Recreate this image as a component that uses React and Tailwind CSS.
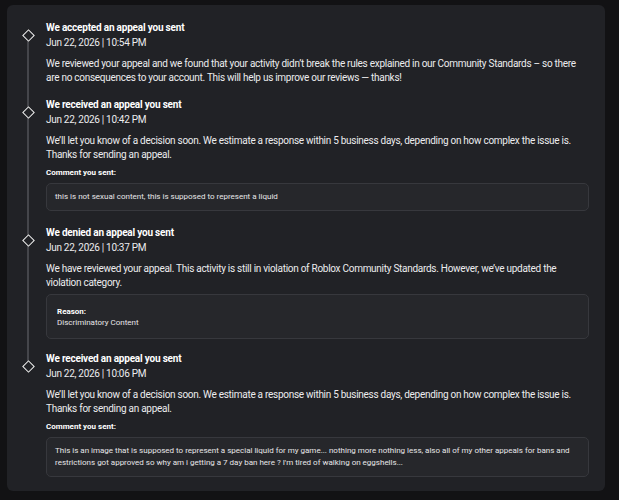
import React from "react";

const items = [
    {
        title: "We accepted an appeal you sent",
        date: "Jun 22, 2026 | 10:54 PM",
        body: "We reviewed your appeal and we found that your activity didn’t break the rules explained in our Community Standards – so there are no consequences to your account. This will help us improve our reviews — thanks!",
    },
    {
        title: "We received an appeal you sent",
        date: "Jun 22, 2026 | 10:42 PM",
        body: "We’ll let you know of a decision soon. We estimate a response within 5 business days, depending on how complex the issue is. Thanks for sending an appeal.",
        comment: "this is not sexual content, this is supposed to represent a liquid",
    },
    {
        title: "We denied an appeal you sent",
        date: "Jun 22, 2026 | 10:37 PM",
        body: "We have reviewed your appeal. This activity is still in violation of Roblox Community Standards. However, we’ve updated the violation category.",
        reason: "Discriminatory Content",
    },
    {
        title: "We received an appeal you sent",
        date: "Jun 22, 2026 | 10:06 PM",
        body: "We’ll let you know of a decision soon. We estimate a response within 5 business days, depending on how complex the issue is. Thanks for sending an appeal.",
        comment: "This is an image that is supposed to represent a special liquid for my game... nothing more nothing less, also all of my other appeals for bans and restrictions got approved so why am i getting a 7 day ban here ? I'm tired of walking on eggshells...",
    },
];

const TimelineItem = ({ item, first, last }) => {
    // comment rows sit a little further from the next entry
    const pad = last ? "pb-[14px]" : item.comment ? "pb-[15px]" : "pb-[13px]";

    return (
        <div className="flex">
            {/* timeline column */}
            <div className="w-[39px] flex flex-col items-center shrink-0 pl-[3px]">
                <div className={`w-[2px] h-[9px] ${first ? "" : "bg-[#45464b]"}`} />
                <div className="w-[9px] h-[9px] rotate-45 border-[1.5px] border-[#f2f2f2] bg-[#212226] my-[1px]" />
                <div className={`w-[2px] flex-1 ${last ? "" : "bg-[#45464b]"}`} />
            </div>

            <div className={`flex-1 pr-[16px] ${pad}`}>
                <div className="text-[10px] leading-[14px] font-bold tracking-[-0.2px] text-white">{item.title}</div>
                <div className="text-[10px] leading-[14px] tracking-[-0.3px] text-[#ececee] mt-[1px]">{item.date}</div>
                <p className="text-[10px] leading-[14px] tracking-[-0.28px] text-[#ececee] mt-[7px]">{item.body}</p>

                {item.comment && (
                    <>
                        <div className="text-[8px] leading-[12px] font-bold text-white mt-[5px]">Comment you sent:</div>
                        <div className="mt-[4px] rounded-[5px] border border-[#37383d] bg-[#26272b] px-[8px] py-[7px] text-[8px] leading-[12px] text-[#e6e6e8]">
                            {item.comment}
                        </div>
                    </>
                )}

                {item.reason && (
                    <div className="mt-[4px] rounded-[5px] border border-[#37383d] bg-[#26272b] px-[10px] py-[10.5px] text-[8px] leading-[11px] text-[#e6e6e8]">
                        <div className="font-bold text-white">Reason:</div>
                        <div>{item.reason}</div>
                    </div>
                )}
            </div>
        </div>
    );
};

const App = () => {
    return (
        <div className="w-[619px] h-[500px] bg-[#121214] pt-[5px] pl-[7px] overflow-hidden" style={{ fontFamily: "Roboto, 'Noto Sans', sans-serif" }}>
            <div className="w-[598px] bg-[#212226] rounded-[6px] pt-[16px]">
                {items.map((item, i) => (
                    <TimelineItem key={i} item={item} first={i === 0} last={i === items.length - 1} />
                ))}
            </div>
        </div>
    );
};

export default App;
